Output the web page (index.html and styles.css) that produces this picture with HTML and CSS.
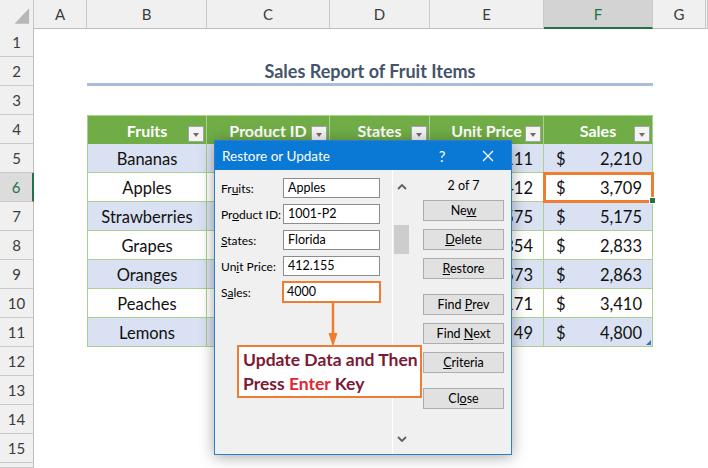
FILE: index.html
```html
<!DOCTYPE html>
<html lang="en">
<head>
    <meta charset="UTF-8">
    <title>Sales Report of Fruit Items - Restore or Update</title>
    <link rel="stylesheet" href="styles.css">
</head>
<body>
    <div class="sheet">
        <!-- Column headers -->
        <div class="row hdr">
            <div class="ch corner">
                <svg width="34" height="28" viewBox="0 0 34 28"><polygon points="30,8 30,24 15,24" fill="#b7b7b7"/></svg>
            </div>
            <div class="ch">A</div>
            <div class="ch">B</div>
            <div class="ch">C</div>
            <div class="ch">D</div>
            <div class="ch">E</div>
            <div class="ch sel">F</div>
            <div class="ch">G</div>
            <div class="ch"></div>
        </div>

        <div class="row"><div class="rh">1</div></div>
        <div class="row">
            <div class="rh">2</div>
            <div></div>
            <div class="title">Sales Report of Fruit Items</div>
        </div>
        <div class="row"><div class="rh">3</div></div>

        <!-- Table header -->
        <div class="row">
            <div class="rh">4</div>
            <div></div>
            <div class="th">Fruits<span class="filter"></span></div>
            <div class="th">Product ID<span class="filter"></span></div>
            <div class="th">States<span class="filter"></span></div>
            <div class="th">Unit Price<span class="filter"></span></div>
            <div class="th">Sales<span class="filter"></span></div>
        </div>

        <div class="row band">
            <div class="rh">5</div><div></div>
            <div class="t">Bananas</div><div class="t">1001-P1</div><div class="t">Texas</div>
            <div class="t money"><span>$</span><span>111</span></div>
            <div class="t money"><span>$</span><span>2,210</span></div>
        </div>
        <div class="row">
            <div class="rh sel">6</div><div></div>
            <div class="t">Apples</div><div class="t">1001-P2</div><div class="t">Florida</div>
            <div class="t money"><span>$</span><span>412</span></div>
            <div class="t money active"><span>$</span><span>3,709</span><i class="handle"></i></div>
        </div>
        <div class="row band">
            <div class="rh">7</div><div></div>
            <div class="t">Strawberries</div><div class="t">1001-P3</div><div class="t">Ohio</div>
            <div class="t money"><span>$</span><span>575</span></div>
            <div class="t money"><span>$</span><span>5,175</span></div>
        </div>
        <div class="row">
            <div class="rh">8</div><div></div>
            <div class="t">Grapes</div><div class="t">1001-P4</div><div class="t">Utah</div>
            <div class="t money"><span>$</span><span>354</span></div>
            <div class="t money"><span>$</span><span>2,833</span></div>
        </div>
        <div class="row band">
            <div class="rh">9</div><div></div>
            <div class="t">Oranges</div><div class="t">1001-P5</div><div class="t">Nevada</div>
            <div class="t money"><span>$</span><span>573</span></div>
            <div class="t money"><span>$</span><span>2,863</span></div>
        </div>
        <div class="row">
            <div class="rh">10</div><div></div>
            <div class="t">Peaches</div><div class="t">1001-P6</div><div class="t">Georgia</div>
            <div class="t money"><span>$</span><span>171</span></div>
            <div class="t money"><span>$</span><span>3,410</span></div>
        </div>
        <div class="row band">
            <div class="rh">11</div><div></div>
            <div class="t">Lemons</div><div class="t">1001-P7</div><div class="t">Arizona</div>
            <div class="t money"><span>$</span><span>49</span></div>
            <div class="t money last"><span>$</span><span>4,800</span><i class="resize"></i></div>
        </div>

        <div class="row"><div class="rh">12</div></div>
        <div class="row"><div class="rh">13</div></div>
        <div class="row"><div class="rh">14</div></div>
        <div class="row"><div class="rh">15</div></div>
        <div class="row short"><div class="rh"></div></div>
    </div>

    <!-- Data form dialog -->
    <div class="dialog">
        <div class="titlebar">
            <span class="caption">Restore or Update</span>
            <span class="tb-btn">?</span>
            <span class="tb-btn">
                <svg width="12" height="12" viewBox="0 0 12 12"><path d="M1 1 L11 11 M11 1 L1 11" stroke="#fff" stroke-width="1.3"/></svg>
            </span>
        </div>
        <div class="dbody">
            <div class="fields">
                <div class="field"><label>Fr<u>u</u>its:</label><div class="input">Apples</div></div>
                <div class="field"><label>Pr<u>o</u>duct ID:</label><div class="input">1001-P2</div></div>
                <div class="field"><label><u>S</u>tates:</label><div class="input">Florida</div></div>
                <div class="field"><label>Un<u>i</u>t Price:</label><div class="input">412.155</div></div>
                <div class="field"><label>S<u>a</u>les:</label><div class="input edit">4000</div></div>
            </div>
            <div class="scroll">
                <div class="arrow-btn">
                    <svg width="10" height="6" viewBox="0 0 10 6"><polyline points="1,5 5,1 9,5" fill="none" stroke="#5f5f5f" stroke-width="1.8"/></svg>
                </div>
                <div class="thumb"></div>
                <div class="arrow-btn down">
                    <svg width="10" height="6" viewBox="0 0 10 6"><polyline points="1,1 5,5 9,1" fill="none" stroke="#5f5f5f" stroke-width="1.8"/></svg>
                </div>
            </div>
            <div class="actions">
                <div class="counter">2 of 7</div>
                <button class="btn first">Ne<u>w</u></button>
                <button class="btn"><u>D</u>elete</button>
                <button class="btn"><u>R</u>estore</button>
                <button class="btn group">Find <u>P</u>rev</button>
                <button class="btn">Find <u>N</u>ext</button>
                <button class="btn"><u>C</u>riteria</button>
                <button class="btn group">Cl<u>o</u>se</button>
            </div>
        </div>
    </div>

    <!-- Annotation -->
    <svg class="pointer" width="12" height="46" viewBox="0 0 12 46">
        <line x1="6" y1="0" x2="6" y2="32" stroke="#ed7d31" stroke-width="2.5"/>
        <polygon points="1.5,30 10.5,30 6,44" fill="#ed7d31"/>
    </svg>
    <div class="callout">
        Update Data and Then<br>
        Press <span class="hl">Enter</span> Key
    </div>
</body>
</html>
```

FILE: styles.css
```css
/* Hoja de cálculo */
body {
    margin: 0;
    font-family: Lato, 'Liberation Sans', sans-serif;
    background-color: #fff;
    overflow: hidden;
}

.sheet {
    width: 708px;
    height: 468px;
    overflow: hidden;
}

.row {
    display: grid;
    grid-template-columns: 34px 53px 120px 123px 100px 114px 109px 53px 1fr;
    height: 29px;
}

.row > div {
    box-sizing: border-box;
}

.row.hdr {
    height: 28px;
}

.row.short {
    height: 5px;
}

/* Cabeceras de fila y columna */
.ch {
    background-color: #f0f0f0;
    border-right: 1px solid #c9c9c9;
    border-bottom: 1px solid #bdbdbd;
    display: flex;
    align-items: center;
    justify-content: center;
    font-size: 15px;
    color: #3c3c3c;
}

.ch.corner {
    padding: 0;
}

.ch.sel {
    background-color: #d3d3d3;
    border-bottom: 2px solid #217346;
    color: #217346;
}

.rh {
    background-color: #f0f0f0;
    border-right: 1px solid #bdbdbd;
    border-bottom: 1px solid #c9c9c9;
    display: flex;
    align-items: center;
    justify-content: center;
    font-size: 15px;
    color: #3c3c3c;
}

.rh.sel {
    background-color: #dcdcdc;
    border-right: 2px solid #217346;
    color: #217346;
}

/* Título */
.title {
    grid-column: 3 / 8;
    border-bottom: 3px solid #a9bcdb;
    display: flex;
    align-items: center;
    justify-content: center;
    font-size: 18px;
    font-weight: bold;
    color: #44546a;
    padding-top: 2px;
}

/* Tabla */
.th {
    position: relative;
    background-color: #70ad47;
    border-right: 1px solid #a9d08e;
    border-top: 1px solid #a9d08e;
    display: flex;
    align-items: center;
    justify-content: center;
    font-size: 16px;
    font-weight: bold;
    color: #fff;
}

.row .th:nth-child(3) {
    border-left: 1px solid #a9d08e;
}

.filter {
    position: absolute;
    right: 2px;
    bottom: 2px;
    width: 16px;
    height: 16px;
    box-sizing: border-box;
    background-color: #f4f4f4;
    border: 1px solid #a3a3a3;
}

.filter::after {
    content: '';
    position: absolute;
    left: 4px;
    top: 6px;
    border-left: 3.5px solid transparent;
    border-right: 3.5px solid transparent;
    border-top: 4px solid #6d6d6d;
}

.t {
    border-right: 1px solid #a9d08e;
    border-bottom: 1px solid #a9d08e;
    display: flex;
    align-items: center;
    justify-content: center;
    font-size: 16.5px;
    color: #111;
    background-color: #fff;
    padding-top: 1px;
}

.row .t:nth-child(3) {
    border-left: 1px solid #a9d08e;
}

.band .t {
    background-color: #d9e1f2;
}

.t.money {
    justify-content: space-between;
    padding: 1px 10px 0 12px;
}

.t.active {
    position: relative;
    outline: 3px solid #ed7d31;
    outline-offset: -2px;
}

.handle {
    position: absolute;
    right: -4px;
    bottom: -3px;
    width: 5px;
    height: 5px;
    background-color: #217346;
    border: 1px solid #fff;
}

.t.last {
    position: relative;
}

.resize {
    position: absolute;
    right: 1px;
    bottom: 1px;
    width: 0;
    height: 0;
    border-left: 5px solid transparent;
    border-bottom: 5px solid #3f6fb5;
}

/* Formulario de datos */
.dialog {
    position: absolute;
    left: 214px;
    top: 140px;
    width: 298px;
    height: 315px;
    box-sizing: border-box;
    border: 1px solid #2f7fc8;
    background-color: #f0f0f0;
    box-shadow: 0 2px 14px rgba(0, 0, 0, 0.35);
    font-family: Lato, 'Noto Sans', sans-serif;
    font-size: 12px;
    color: #000;
}

.titlebar {
    height: 29px;
    background-color: #0a78d5;
    color: #fff;
    display: flex;
    align-items: center;
}

.caption {
    flex: 1;
    padding-left: 7px;
    font-size: 13.5px;
}

.tb-btn {
    width: 46px;
    display: flex;
    align-items: center;
    justify-content: center;
    font-size: 15px;
}

.dbody {
    display: flex;
    height: 284px;
}

.fields {
    width: 177px;
    padding: 8px 0 0 6px;
    box-sizing: border-box;
}

.field {
    display: flex;
    align-items: center;
    height: 20px;
    margin-bottom: 6px;
}

.field label {
    width: 62px;
    white-space: nowrap;
}

.input {
    width: 97px;
    height: 20px;
    box-sizing: border-box;
    border: 1px solid #8c8c8c;
    background-color: #fff;
    padding-left: 4px;
    line-height: 18px;
    font-size: 12.5px;
}

.input.edit {
    width: 99px;
    height: 22px;
    margin-left: -1px;
    border: 2px solid #ed7d31;
    padding-left: 3px;
}

.scroll {
    width: 17px;
    border-left: 1px solid #fff;
    display: flex;
    flex-direction: column;
    align-items: center;
}

.arrow-btn {
    height: 34px;
    display: flex;
    align-items: center;
    justify-content: center;
}

.arrow-btn.down {
    margin-top: auto;
    height: 30px;
}

.thumb {
    width: 15px;
    height: 29px;
    margin-top: 21px;
    background-color: #cdcdcd;
}

.actions {
    flex: 1;
    padding: 6px 0 0 13px;
    display: flex;
    flex-direction: column;
}

.counter {
    width: 81px;
    height: 20px;
    line-height: 20px;
    text-align: center;
    font-size: 12.5px;
}

.btn {
    width: 81px;
    height: 21px;
    margin-top: 8px;
    padding: 0;
    border: 1px solid #adadad;
    background-color: #e1e1e1;
    font-family: inherit;
    font-size: 12.5px;
    color: #000;
}

.btn.first {
    margin-top: 4px;
}

.btn.group {
    margin-top: 15px;
}

/* Anotación */
.pointer {
    position: absolute;
    left: 327px;
    top: 303px;
}

.callout {
    position: absolute;
    left: 237px;
    top: 345px;
    width: 185px;
    height: 53px;
    box-sizing: border-box;
    border: 2px solid #ed7d31;
    background-color: #fff;
    padding: 1px 0 0 4px;
    font-size: 17.5px;
    font-weight: bold;
    line-height: 24px;
    color: #7b1a35;
    white-space: nowrap;
}

.callout .hl {
    color: #e3262f;
}
```
